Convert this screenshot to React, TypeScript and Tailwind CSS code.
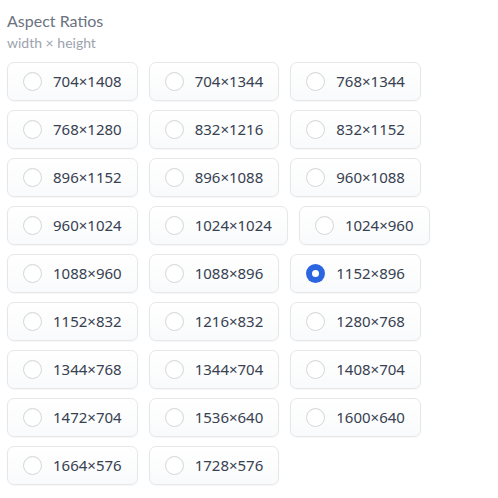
import React from "react";

const items = [
  "704×1408","704×1344","768×1344",
  "768×1280","832×1216","832×1152",
  "896×1152","896×1088","960×1088",
  "960×1024","1024×1024","1024×960",
  "1088×960","1088×896","1152×896",
  "1152×832","1216×832","1280×768",
  "1344×768","1344×704","1408×704",
  "1472×704","1536×640","1600×640",
  "1664×576","1728×576",
];

export default function App() {
  const selected = "1152×896";
  return (
    <div className="w-[498px] h-[498px] bg-white px-[7px] pt-[10px]" style={{ fontFamily: "Lato, 'Noto Sans', sans-serif" }}>
      <div className="text-[16px] leading-[22px] text-[#6b7280]">Aspect Ratios</div>
      <div className="text-[14px] leading-[20px] text-[#9ca3af] mt-[1px]">width × height</div>
      <div className="flex flex-wrap gap-x-[11px] gap-y-[9px] mt-[9px] w-[440px]">
        {items.map((it) => {
          const on = it === selected;
          return (
            <div
              key={it}
              className="h-[39px] flex items-center pl-[15px] pr-[15px] rounded-[7px] border border-[#e5e7eb] bg-gradient-to-b from-white to-[#f9fafb] shadow-[0_1px_2px_rgba(0,0,0,0.04)]"
            >
              {on ? (
                <span className="w-[19px] h-[19px] rounded-full bg-[#2b65e0] flex items-center justify-center">
                  <span className="w-[7px] h-[7px] rounded-full bg-white" />
                </span>
              ) : (
                <span className="w-[19px] h-[19px] rounded-full border border-[#d4d6da] bg-white shadow-[inset_0_1px_1px_rgba(0,0,0,0.03)]" />
              )}
              <span className="ml-[11px] text-[15px] text-[#374151]" style={{ fontFamily: "'Noto Sans', sans-serif" }}>{it}</span>
            </div>
          );
        })}
      </div>
    </div>
  );
}
